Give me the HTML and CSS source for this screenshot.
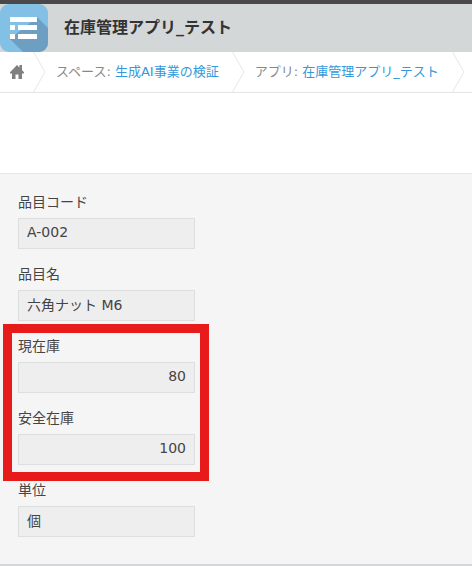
FILE: index.html
```html
<!DOCTYPE html>
<html lang="ja">
<head>
<meta charset="utf-8">
<meta name="viewport" content="width=device-width, initial-scale=1">
<title>在庫管理アプリ_テスト</title>
<link rel="stylesheet" href="styles.css">
</head>
<body>
<header class="app-header">
  <svg class="app-icon" viewBox="0 0 48 48" aria-hidden="true">
    <defs><clipPath id="tile"><rect width="48" height="48" rx="9"/></clipPath></defs>
    <g clip-path="url(#tile)">
      <rect width="48" height="48" fill="#82c0e6"/>
      <path d="M37 13 48 24V48H23L10 35Z" fill="#6c9fc2"/>
    </g>
    <path fill="#fff" d="M10 13h27v5H10zM10 21h5v5h-5zM18 21h19v5H18zM10 30h5v5h-5zM18 30h19v5H18z"/>
  </svg>
  <h1 class="app-title">在庫管理アプリ_テスト</h1>
</header>
<nav class="breadcrumb" aria-label="パンくず">
  <a class="home" href="#" aria-label="ホーム">
    <svg viewBox="0 0 14 14" aria-hidden="true"><path fill="#808080" d="M7 0 9.500 2.500V0H12V5L14 7.200V8.500H12V14H8.500V9.500H5.500V14H2V8.500H0V7.200Z"/></svg>
  </a>
  <svg class="separator" viewBox="0 0 13 40" aria-hidden="true"><path d="M.5 0 12 20 .5 40"/></svg>
  <span class="crumb">スペース: <a href="#">生成AI事業の検証</a></span>
  <svg class="separator" viewBox="0 0 13 40" aria-hidden="true"><path d="M.5 0 12 20 .5 40"/></svg>
  <span class="crumb">アプリ: <a href="#">在庫管理アプリ_テスト</a></span>
  <svg class="separator" viewBox="0 0 13 40" aria-hidden="true"><path d="M.5 0 12 20 .5 40"/></svg>
</nav>
<div class="toolbar"></div>
<main class="record">
  <div class="field"><label for="code">品目コード</label><input id="code" value="A-002" readonly></div>
  <div class="field"><label for="name">品目名</label><input id="name" value="六角ナット M6" readonly></div>
  <div class="stock">
    <div class="field"><label for="current">現在庫</label><input id="current" class="number" value="80" readonly></div>
    <div class="field"><label for="safety">安全在庫</label><input id="safety" class="number" value="100" readonly></div>
  </div>
  <div class="field"><label for="unit">単位</label><input id="unit" value="個" readonly></div>
</main>
</body>
</html>
```
FILE: styles.css
```css
* {
  box-sizing: border-box;
}

body {
  margin: 0;
  border-top: 4px solid #4a4849;
  background: #fff;
  color: #444;
  font-family: "DejaVu Sans", "Noto Sans CJK JP", sans-serif;
  font-size: 14px;
}

.app-header {
  display: flex;
  align-items: center;
  gap: 16px;
  background: #d3d7d8;
}

.app-icon {
  width: 48px;
  height: 48px;
}

.app-title {
  margin: 0;
  color: #333;
  font-size: 16px;
  line-height: 24px;
}

.breadcrumb {
  display: flex;
  align-items: center;
  height: 41px;
  padding-left: 10px;
  border-bottom: 1px solid #e3e7e8;
  color: #888;
  font-size: 13px;
  line-height: 20px;
  white-space: nowrap;
  overflow: hidden;
}

.breadcrumb a {
  color: #3498db;
  text-decoration: none;
}

.home {
  display: flex;
  margin-right: 9px;
}

.home svg {
  width: 14px;
  height: 14px;
}

.separator {
  flex: none;
  width: 13px;
  height: 40px;
  fill: none;
  stroke: #e3e7e8;
}

.crumb {
  margin: 0 13px 0 10px;
}

.toolbar {
  height: 80px;
}

.record {
  padding: 17px 18px 27px;
  border-top: 1px solid #e3e7e8;
  border-bottom: 2px solid #d3d7d8;
  background: #f5f5f5;
}

.field {
  display: flex;
  flex-direction: column;
  width: 177px;
  height: 72px;
}

.record > .field:last-child {
  height: 58px;
}

.field label {
  height: 27px;
  line-height: 22px;
}

.field input {
  width: 100%;
  height: 31px;
  padding: 0 8px 4px;
  border: 1px solid #dddede;
  border-radius: 0;
  outline: 0;
  background: #eee;
  color: #444;
  font: inherit;
}

.field .number {
  text-align: right;
}

.stock {
  position: relative;
  width: 177px;
}

.stock::after {
  content: "";
  position: absolute;
  inset: -11px -14px -2px -15px;
  border: 9px solid #e81b1b;
  pointer-events: none;
}
```
